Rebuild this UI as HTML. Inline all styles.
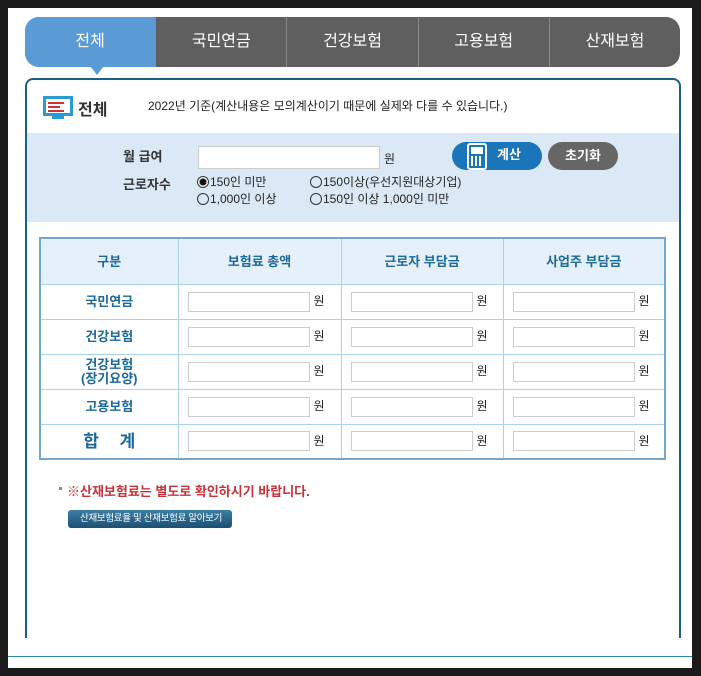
<!DOCTYPE html>
<html><head><meta charset="utf-8"><style>
*{margin:0;padding:0;box-sizing:border-box}
body{width:701px;height:676px;background:#1b1b1b;position:relative;overflow:hidden;font-family:"Liberation Sans","Noto Sans CJK KR",sans-serif}
.page{position:absolute;left:8px;top:8px;width:684px;height:660px;background:#fff}
.abs{position:absolute}
.tabs{position:absolute;left:25px;top:17px;width:655px;height:50px;border-radius:14px;background:#5f5f5f;overflow:hidden;display:flex}
.tab{flex:1;color:#fff;font-size:16px;text-align:center;line-height:50px;border-left:1px solid #888}
.tab.on{background:#5b9bd5;border-left:none}
.panel{position:absolute;left:25px;top:78px;width:656px;height:560px;border:2px solid #1d5f80;border-bottom:none;border-radius:8px 8px 0 0}
.t{font-size:12px;color:#222}
input.f{position:absolute;height:20px;border:1px solid #ccc;background:#fff}
table{position:absolute;left:39px;top:237px;width:627px;border-collapse:collapse;border:2px solid #75a5cc;table-layout:fixed}
td{border:1px solid #a9d3ea;color:#1b6a9a;font-weight:bold;font-size:13px;text-align:center;height:35px;padding:0;line-height:15px}
tr.h td{background:#e5f0fb;height:46px}
td.cell{text-align:left;padding-left:9px}
.cell input{width:122px;height:20px;border:1px solid #ccc;vertical-align:middle}
.cell span{font-size:12px;color:#222;font-weight:normal;margin-left:4px;vertical-align:middle}
.r{display:inline-block;width:12px;height:12px;border:1px solid #333;border-radius:50%;vertical-align:-2px;margin-right:1px}
</style></head><body>
<div class="page"></div>
<div class="tabs"><div class="tab on">전체</div><div class="tab">국민연금</div><div class="tab">건강보험</div><div class="tab">고용보험</div><div class="tab">산재보험</div></div>
<div class="abs" style="left:90px;top:66px;width:0;height:0;border-left:7px solid transparent;border-right:7px solid transparent;border-top:9px solid #5b9bd5"></div>
<div class="panel"></div>
<div class="abs" style="left:27px;top:133px;width:652px;height:89px;background:#dbe9f6"></div>
<svg class="abs" style="left:43px;top:96px" width="30" height="24"><rect x="1.5" y="1.5" width="27" height="17" fill="#fff" stroke="#2a9ad6" stroke-width="3"/><rect x="5" y="6" width="16" height="2" fill="#c33"/><rect x="5" y="10" width="12" height="2" fill="#c33"/><rect x="5" y="14" width="16" height="2" fill="#c33"/><rect x="9" y="20" width="12" height="3" fill="#2a9ad6"/></svg>
<div class="abs" style="left:78px;top:96px;font-size:16px;font-weight:bold;color:#333">전체</div>
<div class="abs t" style="left:148px;top:97px">2022년 기준(계산내용은 모의계산이기 때문에 실제와 다를 수 있습니다.)</div>
<div class="abs" style="left:123px;top:146px;font-size:13px;font-weight:bold;color:#333">월 급여</div>
<input class="f" style="left:198px;top:146px;width:182px;height:23px">
<div class="abs t" style="left:384px;top:150px">원</div>
<div class="abs" style="left:452px;top:142px;width:90px;height:28px;border-radius:14px;background:#1a75bb;color:#fff;font-size:13px;font-weight:bold;line-height:26px;padding-left:45px">계산</div>
<div class="abs" style="left:467px;top:143px;width:20px;height:27px;border:2px solid #fff;border-radius:3px;background:#1a75bb"><div style="margin:2px;height:7px;background:#fff"></div><div style="margin:2px;height:10px;background:repeating-linear-gradient(90deg,#fff 0 2px,transparent 2px 4px)"></div></div>
<div class="abs" style="left:548px;top:142px;width:70px;height:28px;border-radius:14px;background:#666;color:#fff;font-size:13px;font-weight:bold;text-align:center;line-height:27px">초기화</div>
<div class="abs" style="left:123px;top:174px;font-size:13px;font-weight:bold;color:#333">근로자수</div>
<div class="abs t" style="left:197px;top:173px"><span class="r" style="background:radial-gradient(#111 3px,#fff 4px)"></span>150인 미만</div>
<div class="abs t" style="left:310px;top:173px"><span class="r"></span>150이상(우선지원대상기업)</div>
<div class="abs t" style="left:197px;top:190px"><span class="r"></span>1,000인 이상</div>
<div class="abs t" style="left:310px;top:190px"><span class="r"></span>150인 이상 1,000인 미만</div>
<table>
<colgroup><col style="width:138px"><col style="width:163px"><col style="width:162px"><col></colgroup>
<tr class="h"><td>구분</td><td>보험료 총액</td><td>근로자 부담금</td><td>사업주 부담금</td></tr>
<tr><td>국민연금</td><td class="cell"><input><span>원</span></td><td class="cell"><input><span>원</span></td><td class="cell"><input><span>원</span></td></tr>
<tr><td>건강보험</td><td class="cell"><input><span>원</span></td><td class="cell"><input><span>원</span></td><td class="cell"><input><span>원</span></td></tr>
<tr><td style="line-height:14px">건강보험<br>(장기요양)</td><td class="cell"><input><span>원</span></td><td class="cell"><input><span>원</span></td><td class="cell"><input><span>원</span></td></tr>
<tr><td>고용보험</td><td class="cell"><input><span>원</span></td><td class="cell"><input><span>원</span></td><td class="cell"><input><span>원</span></td></tr>
<tr><td style="font-size:17px;word-spacing:16px">합 계</td><td class="cell"><input><span>원</span></td><td class="cell"><input><span>원</span></td><td class="cell"><input><span>원</span></td></tr>
</table>
<div class="abs" style="left:59px;top:487px;width:3px;height:3px;background:#888"></div>
<div class="abs" style="left:67px;top:481px;font-size:13px;font-weight:bold;color:#c8333b">※산재보험료는 별도로 확인하시기 바랍니다.</div>
<div class="abs" style="left:68px;top:510px;width:164px;height:18px;border-radius:3px;background:linear-gradient(#3b7fa8,#1d4f70);color:#fff;font-size:9.5px;letter-spacing:-0.3px;line-height:18px;padding-left:12px;white-space:nowrap;overflow:hidden">산재보험료율 및 산재보험료 알아보기</div>
<div class="abs" style="left:8px;top:656px;width:684px;height:1px;background:#2a8aaa"></div>
</body></html>
